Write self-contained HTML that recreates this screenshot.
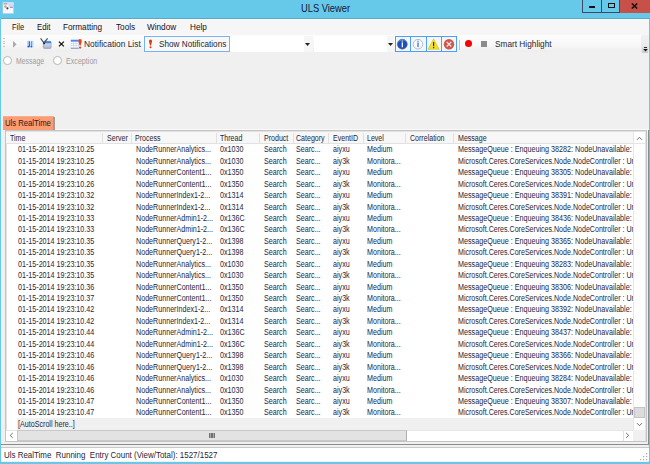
<!DOCTYPE html>
<html><head><meta charset="utf-8">
<style>
*{margin:0;padding:0;box-sizing:border-box}
html,body{width:650px;height:464px;overflow:hidden;background:#67c9e9;font-family:"Liberation Sans",sans-serif;color:#262636;position:relative}
.a{position:absolute}
.t{position:absolute;white-space:nowrap;font-size:8.5px;line-height:11px;transform-origin:0 0;transform:scaleX(0.84)}
.row{position:absolute;left:0;width:627px;height:11.44px}
.hdr{position:absolute;white-space:nowrap;font-size:8.5px;line-height:11px;transform-origin:0 0;transform:scaleX(0.83)}
.sep{position:absolute;top:133px;width:1px;height:10px;background:#e0e0e0}
.mn{position:absolute;top:21px;font-size:9px;color:#121226;line-height:12px;white-space:nowrap;transform-origin:0 0;transform:scaleX(0.91)}
.tb{position:absolute;font-size:9.3px;line-height:12px;white-space:nowrap;transform-origin:0 0}
</style></head><body>
<!-- title bar -->
<div class="a" style="left:300.5px;top:1.9px;font-size:10.6px;line-height:13px;white-space:nowrap;color:#14163a;transform-origin:0 0;transform:scaleX(0.88)">ULS Viewer</div>
<div class="a" style="left:582px;top:0;width:20px;height:13px;border-left:1px solid #3b4a66;border-bottom:1px solid #3b4a66;border-right:1px solid #3b4a66"></div>
<div class="a" style="left:601px;top:0;width:19px;height:13px;border-bottom:1px solid #3b4a66;border-right:1px solid #3b4a66"></div>
<div class="a" style="left:620px;top:0;width:30px;height:13px;background:#c75049"></div>
<div class="a" style="left:588.6px;top:6px;width:6.6px;height:2px;background:#111"></div>
<div class="a" style="left:607.5px;top:3px;width:7px;height:5px;border:1.5px solid #111"></div>
<svg class="a" style="left:631px;top:2.5px" width="7" height="6" viewBox="0 0 7 6"><path d="M0.8 0.5 L6.2 5.5 M6.2 0.5 L0.8 5.5" stroke="#111" stroke-width="1.5"/></svg>
<!-- client -->
<div class="a" style="left:1px;top:18px;width:648px;height:444px;background:#f0f0f0"></div>
<div class="a" style="left:1px;top:18px;width:648px;height:1px;background:#5aa9c8"></div>
<div class="a" style="left:1px;top:19px;width:648px;height:16px;background:#f6f6f6;border-top:1px solid #fdfdfd"></div>
<!-- menu -->
<div class="mn" style="left:11.5px;transform:scaleX(0.83)">File</div>
<div class="mn" style="left:36.5px;transform:scaleX(0.87)">Edit</div>
<div class="mn" style="left:62.9px">Formatting</div>
<div class="mn" style="left:115.5px">Tools</div>
<div class="mn" style="left:147.3px">Window</div>
<div class="mn" style="left:189.6px">Help</div>
<!-- toolbar -->
<div class="a" style="left:1px;top:35px;width:641px;height:17px;background:linear-gradient(#fdfdfd,#f8f8f8 55%,#ededed)"></div>
<div class="a" style="left:641px;top:35px;width:8px;height:17px;background:linear-gradient(#f2f2f2,#e6e6e6)"></div>
<div class="tb" style="left:83.5px;top:37.6px;transform:scaleX(0.90)">Notification List</div>
<div class="a" style="left:144px;top:36px;width:86px;height:15.5px;border:1px solid #78b0f0;background:#f8f8f8"></div>
<div class="tb" style="left:158.5px;top:37.6px;transform:scaleX(0.88)">Show Notifications</div>
<div class="a" style="left:230px;top:36px;width:82.5px;height:15.5px;background:#fff"></div>
<div class="a" style="left:303.5px;top:36px;width:9px;height:15.5px;background:#f6f6f6"></div>
<div class="a" style="left:314px;top:36px;width:79px;height:15.5px;background:#fff"></div>
<div class="a" style="left:386.5px;top:36px;width:7px;height:15.5px;background:#f6f6f6"></div>
<div class="tb" style="left:495.4px;top:37.6px;transform:scaleX(0.89)">Smart Highlight</div>

<!-- app icon -->
<svg class="a" style="left:2px;top:2px" width="13" height="13" viewBox="0 0 13 13">
<rect x="0.9" y="0.5" width="10.6" height="11" fill="#f6f8fd" stroke="#c0cce4" stroke-width="0.5"/>
<rect x="0.9" y="0.5" width="10.6" height="2.4" fill="#dfe6f4"/>
<rect x="1.6" y="1" width="3.6" height="1.4" fill="#9ab0dc"/>
<rect x="6.4" y="1.6" width="4.8" height="3.2" fill="#d2dbee"/>
<circle cx="3.4" cy="4.6" r="1.3" fill="#f2a446"/>
<circle cx="5.4" cy="6.3" r="1.1" fill="#36466a"/>
<rect x="7.8" y="4.8" width="3" height="1.1" fill="#a088d0"/>
</svg>
<!-- grip -->
<div class="a" style="left:3px;top:37.8px;width:2px;height:1px;background:#c4c4c4"></div>
<div class="a" style="left:3px;top:40.5px;width:2px;height:1px;background:#c4c4c4"></div>
<div class="a" style="left:3px;top:43.3px;width:2px;height:1px;background:#c4c4c4"></div>
<div class="a" style="left:3px;top:46px;width:2px;height:1px;background:#c4c4c4"></div>
<!-- play -->
<svg class="a" style="left:12px;top:40px" width="6" height="9" viewBox="0 0 6 9"><path d="M1 1 L4.6 4.3 L1 7.8 Z" fill="#aaaaaa"/></svg>
<!-- pause -->
<svg class="a" style="left:22px;top:36px" width="16" height="16" viewBox="0 0 16 16">
<rect x="5.2" y="4.8" width="3.1" height="6.6" rx="0.6" fill="#a9d0f8"/>
<rect x="8.6" y="4.8" width="2.8" height="6.6" rx="0.6" fill="#b4d8fa"/>
<rect x="6.9" y="5.4" width="1" height="5.3" fill="#3c56a8"/>
<rect x="9.0" y="5.4" width="0.9" height="5.3" fill="#6a8ad8"/>
<circle cx="6.4" cy="10.6" r="0.9" fill="#2a5cc8"/>
<circle cx="9.3" cy="10.6" r="0.9" fill="#2a5cd8"/>
</svg>
<!-- filter -->
<svg class="a" style="left:38px;top:36px" width="16" height="16" viewBox="0 0 16 16">
<defs><linearGradient id="wg" x1="0" y1="0" x2="0" y2="1"><stop offset="0" stop-color="#e4e8ee"/><stop offset="1" stop-color="#aab6cc"/></linearGradient></defs>
<rect x="5.3" y="5.3" width="7.8" height="7.1" rx="1" fill="url(#wg)" stroke="#7c94bc" stroke-width="0.6"/>
<rect x="5.3" y="5.3" width="7.8" height="1.9" rx="0.8" fill="#3a84ec"/>
<path d="M2.6 2.4 L6 7 M9.6 2.4 L6.6 6.2" stroke="#505050" stroke-width="1.2" fill="none"/>
<circle cx="6.1" cy="7.4" r="0.9" fill="#1a1a1a"/>
</svg>
<!-- X -->
<svg class="a" style="left:58px;top:40.5px" width="7" height="6" viewBox="0 0 7 6"><path d="M0.9 0.6 L5.9 5.4 M5.9 0.6 L0.9 5.4" stroke="#111" stroke-width="1.25"/></svg>
<!-- calendar -->
<svg class="a" style="left:68px;top:36px" width="16" height="16" viewBox="0 0 16 16">
<rect x="2.8" y="3.8" width="7.9" height="8.8" fill="#c4d2ea"/>
<rect x="2.8" y="3.8" width="7.9" height="1.8" fill="#4a8ae4"/>
<rect x="3.3" y="5.9" width="1.9" height="1.3" fill="#fff"/><rect x="5.8" y="5.9" width="1.9" height="1.3" fill="#fff"/><rect x="8.3" y="5.9" width="1.9" height="1.3" fill="#fff"/><rect x="3.3" y="7.9" width="1.9" height="1.3" fill="#fff"/><rect x="5.8" y="7.9" width="1.9" height="1.3" fill="#fff"/><rect x="8.3" y="7.9" width="1.9" height="1.3" fill="#fff"/><rect x="3.3" y="9.9" width="1.9" height="1.3" fill="#fff"/><rect x="5.8" y="9.9" width="1.9" height="1.3" fill="#fff"/><rect x="8.3" y="9.9" width="1.9" height="1.3" fill="#fff"/>
<rect x="2.8" y="12" width="7.9" height="0.7" fill="#8092b8"/>
<path d="M11.9 3 Q14 3 13.7 5.2 L12.7 9.5 L11.6 9.5 L10.5 5.2 Q10 3 11.9 3 Z" fill="#e8401c"/>
<circle cx="12.1" cy="11.6" r="1.1" fill="#e8401c"/>
</svg>
<!-- show notif ! -->
<svg class="a" style="left:147.5px;top:38.5px" width="5" height="10" viewBox="0 0 5 10">
<path d="M2.5 0.4 Q4.4 0.4 4 2.5 L3 6.6 L2 6.6 L1 2.5 Q0.6 0.4 2.5 0.4 Z" fill="#e23a18"/>
<circle cx="2.5" cy="8.3" r="1" fill="#e23a18"/>
</svg>
<!-- combo arrows -->
<svg class="a" style="left:305px;top:42.5px" width="5" height="3" viewBox="0 0 5 3"><path d="M0 0 H5 L2.5 3 Z" fill="#222"/></svg>
<svg class="a" style="left:388px;top:42.5px" width="5" height="3" viewBox="0 0 5 3"><path d="M0 0 H5 L2.5 3 Z" fill="#222"/></svg>
<!-- level buttons -->
<div class="a" style="left:395px;top:36px;width:62px;height:15.5px;border:1px solid #4aa0f8;background:#f6f6f6"></div>
<div class="a" style="left:410px;top:36px;width:1.3px;height:15.5px;background:#4aa0f8"></div>
<div class="a" style="left:425.5px;top:36px;width:1.3px;height:15.5px;background:#4aa0f8"></div>
<div class="a" style="left:441px;top:36px;width:1.3px;height:15.5px;background:#4aa0f8"></div>
<svg class="a" style="left:396px;top:37.5px" width="14" height="13" viewBox="0 0 14 13">
<circle cx="6.3" cy="6.2" r="5" fill="#1f4fb8" stroke="#6a6a70" stroke-width="0.5"/>
<path d="M2 4 Q6 0 10 3" stroke="#5a8ae0" stroke-width="1" fill="none"/>
<rect x="5.7" y="2.6" width="1.2" height="1" fill="#fff"/>
<rect x="5.7" y="4.3" width="1.2" height="5" fill="#fff"/>
</svg>
<svg class="a" style="left:411px;top:37.5px" width="14" height="13" viewBox="0 0 14 13">
<circle cx="7" cy="6.2" r="4.8" fill="#f6f8fc" stroke="#a8b8cc" stroke-width="0.9"/>
<rect x="6.4" y="2.8" width="1.2" height="1" fill="#3068c8"/>
<rect x="6.4" y="4.5" width="1.2" height="4.6" fill="#3068c8"/>
</svg>
<svg class="a" style="left:427px;top:37.5px" width="14" height="13" viewBox="0 0 14 13">
<path d="M6.6 0.8 L12.2 11.3 L1 11.3 Z" fill="#f4e21a" stroke="#c8b030" stroke-width="0.5"/>
<rect x="6" y="4" width="1.2" height="4.2" fill="#2a2a40"/>
<rect x="6" y="9" width="1.2" height="1.2" fill="#2a2a40"/>
</svg>
<svg class="a" style="left:442px;top:37.5px" width="14" height="13" viewBox="0 0 14 13">
<circle cx="7" cy="6.2" r="5.2" fill="#cc5a4c"/>
<path d="M4.7 3.9 L9.3 8.5 M9.3 3.9 L4.7 8.5" stroke="#f4e4e0" stroke-width="1.3"/>
</svg>
<div class="a" style="left:459px;top:39.5px;width:1px;height:10.5px;background:#c4c4c4"></div>
<div class="a" style="left:464.8px;top:39.9px;width:7.2px;height:7.2px;border-radius:50%;background:#f40000"></div>
<div class="a" style="left:480.8px;top:40.8px;width:6.5px;height:6px;background:#8c8c8c"></div>
<!-- overflow -->
<div class="a" style="left:642px;top:45.5px;width:6px;height:7px;background:linear-gradient(#e8e8e8,#c8c8c8)"></div>
<div class="a" style="left:643.5px;top:47px;width:3px;height:0.8px;background:#333"></div>
<svg class="a" style="left:643px;top:48.5px" width="5" height="3" viewBox="0 0 5 3"><path d="M0.2 0 H4.8 L2.5 2.6 Z" fill="#111"/></svg>

<!-- radios -->
<div class="a" style="left:3.2px;top:56.2px;width:8.5px;height:8.5px;border-radius:50%;border:1px solid #b8b8b8;background:#fff"></div>
<div class="a" style="left:53px;top:56.2px;width:8.5px;height:8.5px;border-radius:50%;border:1px solid #b8b8b8;background:#fff"></div>
<div class="a" style="left:16.3px;top:56px;font-size:8.6px;line-height:11px;color:#9c9ca4;white-space:nowrap;transform-origin:0 0;transform:scaleX(0.805)">Message</div>
<div class="a" style="left:66px;top:56px;font-size:8.6px;line-height:11px;color:#9c9ca4;white-space:nowrap;transform-origin:0 0;transform:scaleX(0.83)">Exception</div>
<!-- tab -->
<div class="a" style="left:3px;top:116.3px;width:50.5px;height:14.2px;background:#fd9b72;border-top:1px solid #f9ae94"></div><div class="a" style="left:53px;top:116.5px;width:1.5px;height:14px;background:#a39b96"></div>
<div class="a" style="left:4.7px;top:117.3px;font-size:9.4px;line-height:12px;white-space:nowrap;color:#2a1a1a;transform-origin:0 0;transform:scaleX(0.82)">Uls RealTime</div>
<!-- listview -->
<div class="a" style="left:54.5px;top:129px;width:594px;height:1px;background:#fafafa"></div>
<div class="a" style="left:4.5px;top:129.8px;width:642px;height:312.5px;border:1px solid #c4c4c4;background:#fff"></div>
<div class="a" style="left:5.5px;top:130.8px;width:640px;height:310.5px;border:1px solid #e2e2e2"></div>
<div class="a" style="left:6px;top:132px;width:627px;height:11.5px;background:#f7f7f7;border-bottom:1px solid #e2e2e2"></div>
<div class="sep" style="left:102px"></div><div class="sep" style="left:131px"></div><div class="sep" style="left:216px"></div><div class="sep" style="left:259px"></div><div class="sep" style="left:293px"></div><div class="sep" style="left:328px"></div><div class="sep" style="left:363px"></div><div class="sep" style="left:405px"></div><div class="sep" style="left:453px"></div><div class="sep" style="left:633px"></div>
<div class="hdr" style="left:10px;top:133.3px">Time</div><div class="hdr" style="left:106.5px;top:133.3px">Server</div><div class="hdr" style="left:135.4px;top:133.3px">Process</div><div class="hdr" style="left:220.4px;top:133.3px">Thread</div><div class="hdr" style="left:263.6px;top:133.3px">Product</div><div class="hdr" style="left:296px;top:133.3px">Category</div><div class="hdr" style="left:332.7px;top:133.3px">EventID</div><div class="hdr" style="left:367.3px;top:133.3px">Level</div><div class="hdr" style="left:409.6px;top:133.3px">Correlation</div><div class="hdr" style="left:457.6px;top:133.3px">Message</div>
<div class="a" style="left:6px;top:132px;width:627px;height:298px;overflow:hidden">
<div class="row" style="top:12.30px"><div class="t" style="left:12.2px;top:0px">01-15-2014 19:23:10.25</div><div class="t" style="left:129.8px;top:0px">NodeRunnerAnalytics...</div><div class="t" style="left:214.4px;top:0px">0x1030</div><div class="t" style="left:257.6px;top:0px">Search</div><div class="t" style="left:290.0px;top:0px">Searc...</div><div class="t" style="left:326.7px;top:0px">aiyxu</div><div class="t" style="left:361.3px;top:0px">Medium</div><div class="t" style="left:452.0px;top:0;transform:scaleX(0.845)">MessageQueue : Enqueuing 38282: NodeUnavailable:</div></div><div class="row" style="top:23.74px"><div class="t" style="left:12.2px;top:0px">01-15-2014 19:23:10.25</div><div class="t" style="left:129.8px;top:0px">NodeRunnerAnalytics...</div><div class="t" style="left:214.4px;top:0px">0x1030</div><div class="t" style="left:257.6px;top:0px">Search</div><div class="t" style="left:290.0px;top:0px">Searc...</div><div class="t" style="left:326.7px;top:0px">aiy3k</div><div class="t" style="left:361.3px;top:0px">Monitora...</div><div class="t" style="left:452.0px;top:0;transform:scaleX(0.833)">Microsoft.Ceres.CoreServices.Node.NodeController : Un</div></div><div class="row" style="top:35.18px"><div class="t" style="left:12.2px;top:0px">01-15-2014 19:23:10.26</div><div class="t" style="left:129.8px;top:0px">NodeRunnerContent1...</div><div class="t" style="left:214.4px;top:0px">0x1350</div><div class="t" style="left:257.6px;top:0px">Search</div><div class="t" style="left:290.0px;top:0px">Searc...</div><div class="t" style="left:326.7px;top:0px">aiyxu</div><div class="t" style="left:361.3px;top:0px">Medium</div><div class="t" style="left:452.0px;top:0;transform:scaleX(0.845)">MessageQueue : Enqueuing 38305: NodeUnavailable:</div></div><div class="row" style="top:46.62px"><div class="t" style="left:12.2px;top:0px">01-15-2014 19:23:10.26</div><div class="t" style="left:129.8px;top:0px">NodeRunnerContent1...</div><div class="t" style="left:214.4px;top:0px">0x1350</div><div class="t" style="left:257.6px;top:0px">Search</div><div class="t" style="left:290.0px;top:0px">Searc...</div><div class="t" style="left:326.7px;top:0px">aiy3k</div><div class="t" style="left:361.3px;top:0px">Monitora...</div><div class="t" style="left:452.0px;top:0;transform:scaleX(0.833)">Microsoft.Ceres.CoreServices.Node.NodeController : Un</div></div><div class="row" style="top:58.06px"><div class="t" style="left:12.2px;top:0px">01-15-2014 19:23:10.32</div><div class="t" style="left:129.8px;top:0px">NodeRunnerIndex1-2...</div><div class="t" style="left:214.4px;top:0px">0x1314</div><div class="t" style="left:257.6px;top:0px">Search</div><div class="t" style="left:290.0px;top:0px">Searc...</div><div class="t" style="left:326.7px;top:0px">aiyxu</div><div class="t" style="left:361.3px;top:0px">Medium</div><div class="t" style="left:452.0px;top:0;transform:scaleX(0.845)">MessageQueue : Enqueuing 38391: NodeUnavailable:</div></div><div class="row" style="top:69.50px"><div class="t" style="left:12.2px;top:0px">01-15-2014 19:23:10.32</div><div class="t" style="left:129.8px;top:0px">NodeRunnerIndex1-2...</div><div class="t" style="left:214.4px;top:0px">0x1314</div><div class="t" style="left:257.6px;top:0px">Search</div><div class="t" style="left:290.0px;top:0px">Searc...</div><div class="t" style="left:326.7px;top:0px">aiy3k</div><div class="t" style="left:361.3px;top:0px">Monitora...</div><div class="t" style="left:452.0px;top:0;transform:scaleX(0.833)">Microsoft.Ceres.CoreServices.Node.NodeController : Un</div></div><div class="row" style="top:80.94px"><div class="t" style="left:12.2px;top:0px">01-15-2014 19:23:10.33</div><div class="t" style="left:129.8px;top:0px">NodeRunnerAdmin1-2...</div><div class="t" style="left:214.4px;top:0px">0x136C</div><div class="t" style="left:257.6px;top:0px">Search</div><div class="t" style="left:290.0px;top:0px">Searc...</div><div class="t" style="left:326.7px;top:0px">aiyxu</div><div class="t" style="left:361.3px;top:0px">Medium</div><div class="t" style="left:452.0px;top:0;transform:scaleX(0.845)">MessageQueue : Enqueuing 38436: NodeUnavailable:</div></div><div class="row" style="top:92.38px"><div class="t" style="left:12.2px;top:0px">01-15-2014 19:23:10.33</div><div class="t" style="left:129.8px;top:0px">NodeRunnerAdmin1-2...</div><div class="t" style="left:214.4px;top:0px">0x136C</div><div class="t" style="left:257.6px;top:0px">Search</div><div class="t" style="left:290.0px;top:0px">Searc...</div><div class="t" style="left:326.7px;top:0px">aiy3k</div><div class="t" style="left:361.3px;top:0px">Monitora...</div><div class="t" style="left:452.0px;top:0;transform:scaleX(0.833)">Microsoft.Ceres.CoreServices.Node.NodeController : Un</div></div><div class="row" style="top:103.82px"><div class="t" style="left:12.2px;top:0px">01-15-2014 19:23:10.35</div><div class="t" style="left:129.8px;top:0px">NodeRunnerQuery1-2...</div><div class="t" style="left:214.4px;top:0px">0x1398</div><div class="t" style="left:257.6px;top:0px">Search</div><div class="t" style="left:290.0px;top:0px">Searc...</div><div class="t" style="left:326.7px;top:0px">aiyxu</div><div class="t" style="left:361.3px;top:0px">Medium</div><div class="t" style="left:452.0px;top:0;transform:scaleX(0.845)">MessageQueue : Enqueuing 38365: NodeUnavailable:</div></div><div class="row" style="top:115.26px"><div class="t" style="left:12.2px;top:0px">01-15-2014 19:23:10.35</div><div class="t" style="left:129.8px;top:0px">NodeRunnerQuery1-2...</div><div class="t" style="left:214.4px;top:0px">0x1398</div><div class="t" style="left:257.6px;top:0px">Search</div><div class="t" style="left:290.0px;top:0px">Searc...</div><div class="t" style="left:326.7px;top:0px">aiy3k</div><div class="t" style="left:361.3px;top:0px">Monitora...</div><div class="t" style="left:452.0px;top:0;transform:scaleX(0.833)">Microsoft.Ceres.CoreServices.Node.NodeController : Un</div></div><div class="row" style="top:126.70px"><div class="t" style="left:12.2px;top:0px">01-15-2014 19:23:10.35</div><div class="t" style="left:129.8px;top:0px">NodeRunnerAnalytics...</div><div class="t" style="left:214.4px;top:0px">0x1030</div><div class="t" style="left:257.6px;top:0px">Search</div><div class="t" style="left:290.0px;top:0px">Searc...</div><div class="t" style="left:326.7px;top:0px">aiyxu</div><div class="t" style="left:361.3px;top:0px">Medium</div><div class="t" style="left:452.0px;top:0;transform:scaleX(0.845)">MessageQueue : Enqueuing 38283: NodeUnavailable:</div></div><div class="row" style="top:138.14px"><div class="t" style="left:12.2px;top:0px">01-15-2014 19:23:10.35</div><div class="t" style="left:129.8px;top:0px">NodeRunnerAnalytics...</div><div class="t" style="left:214.4px;top:0px">0x1030</div><div class="t" style="left:257.6px;top:0px">Search</div><div class="t" style="left:290.0px;top:0px">Searc...</div><div class="t" style="left:326.7px;top:0px">aiy3k</div><div class="t" style="left:361.3px;top:0px">Monitora...</div><div class="t" style="left:452.0px;top:0;transform:scaleX(0.833)">Microsoft.Ceres.CoreServices.Node.NodeController : Un</div></div><div class="row" style="top:149.58px"><div class="t" style="left:12.2px;top:0px">01-15-2014 19:23:10.36</div><div class="t" style="left:129.8px;top:0px">NodeRunnerContent1...</div><div class="t" style="left:214.4px;top:0px">0x1350</div><div class="t" style="left:257.6px;top:0px">Search</div><div class="t" style="left:290.0px;top:0px">Searc...</div><div class="t" style="left:326.7px;top:0px">aiyxu</div><div class="t" style="left:361.3px;top:0px">Medium</div><div class="t" style="left:452.0px;top:0;transform:scaleX(0.845)">MessageQueue : Enqueuing 38306: NodeUnavailable:</div></div><div class="row" style="top:161.02px"><div class="t" style="left:12.2px;top:0px">01-15-2014 19:23:10.37</div><div class="t" style="left:129.8px;top:0px">NodeRunnerContent1...</div><div class="t" style="left:214.4px;top:0px">0x1350</div><div class="t" style="left:257.6px;top:0px">Search</div><div class="t" style="left:290.0px;top:0px">Searc...</div><div class="t" style="left:326.7px;top:0px">aiy3k</div><div class="t" style="left:361.3px;top:0px">Monitora...</div><div class="t" style="left:452.0px;top:0;transform:scaleX(0.833)">Microsoft.Ceres.CoreServices.Node.NodeController : Un</div></div><div class="row" style="top:172.46px"><div class="t" style="left:12.2px;top:0px">01-15-2014 19:23:10.42</div><div class="t" style="left:129.8px;top:0px">NodeRunnerIndex1-2...</div><div class="t" style="left:214.4px;top:0px">0x1314</div><div class="t" style="left:257.6px;top:0px">Search</div><div class="t" style="left:290.0px;top:0px">Searc...</div><div class="t" style="left:326.7px;top:0px">aiyxu</div><div class="t" style="left:361.3px;top:0px">Medium</div><div class="t" style="left:452.0px;top:0;transform:scaleX(0.845)">MessageQueue : Enqueuing 38392: NodeUnavailable:</div></div><div class="row" style="top:183.90px"><div class="t" style="left:12.2px;top:0px">01-15-2014 19:23:10.42</div><div class="t" style="left:129.8px;top:0px">NodeRunnerIndex1-2...</div><div class="t" style="left:214.4px;top:0px">0x1314</div><div class="t" style="left:257.6px;top:0px">Search</div><div class="t" style="left:290.0px;top:0px">Searc...</div><div class="t" style="left:326.7px;top:0px">aiy3k</div><div class="t" style="left:361.3px;top:0px">Monitora...</div><div class="t" style="left:452.0px;top:0;transform:scaleX(0.833)">Microsoft.Ceres.CoreServices.Node.NodeController : Un</div></div><div class="row" style="top:195.34px"><div class="t" style="left:12.2px;top:0px">01-15-2014 19:23:10.44</div><div class="t" style="left:129.8px;top:0px">NodeRunnerAdmin1-2...</div><div class="t" style="left:214.4px;top:0px">0x136C</div><div class="t" style="left:257.6px;top:0px">Search</div><div class="t" style="left:290.0px;top:0px">Searc...</div><div class="t" style="left:326.7px;top:0px">aiyxu</div><div class="t" style="left:361.3px;top:0px">Medium</div><div class="t" style="left:452.0px;top:0;transform:scaleX(0.845)">MessageQueue : Enqueuing 38437: NodeUnavailable:</div></div><div class="row" style="top:206.78px"><div class="t" style="left:12.2px;top:0px">01-15-2014 19:23:10.44</div><div class="t" style="left:129.8px;top:0px">NodeRunnerAdmin1-2...</div><div class="t" style="left:214.4px;top:0px">0x136C</div><div class="t" style="left:257.6px;top:0px">Search</div><div class="t" style="left:290.0px;top:0px">Searc...</div><div class="t" style="left:326.7px;top:0px">aiy3k</div><div class="t" style="left:361.3px;top:0px">Monitora...</div><div class="t" style="left:452.0px;top:0;transform:scaleX(0.833)">Microsoft.Ceres.CoreServices.Node.NodeController : Un</div></div><div class="row" style="top:218.22px"><div class="t" style="left:12.2px;top:0px">01-15-2014 19:23:10.46</div><div class="t" style="left:129.8px;top:0px">NodeRunnerQuery1-2...</div><div class="t" style="left:214.4px;top:0px">0x1398</div><div class="t" style="left:257.6px;top:0px">Search</div><div class="t" style="left:290.0px;top:0px">Searc...</div><div class="t" style="left:326.7px;top:0px">aiyxu</div><div class="t" style="left:361.3px;top:0px">Medium</div><div class="t" style="left:452.0px;top:0;transform:scaleX(0.845)">MessageQueue : Enqueuing 38366: NodeUnavailable:</div></div><div class="row" style="top:229.66px"><div class="t" style="left:12.2px;top:0px">01-15-2014 19:23:10.46</div><div class="t" style="left:129.8px;top:0px">NodeRunnerQuery1-2...</div><div class="t" style="left:214.4px;top:0px">0x1398</div><div class="t" style="left:257.6px;top:0px">Search</div><div class="t" style="left:290.0px;top:0px">Searc...</div><div class="t" style="left:326.7px;top:0px">aiy3k</div><div class="t" style="left:361.3px;top:0px">Monitora...</div><div class="t" style="left:452.0px;top:0;transform:scaleX(0.833)">Microsoft.Ceres.CoreServices.Node.NodeController : Un</div></div><div class="row" style="top:241.10px"><div class="t" style="left:12.2px;top:0px">01-15-2014 19:23:10.46</div><div class="t" style="left:129.8px;top:0px">NodeRunnerAnalytics...</div><div class="t" style="left:214.4px;top:0px">0x1030</div><div class="t" style="left:257.6px;top:0px">Search</div><div class="t" style="left:290.0px;top:0px">Searc...</div><div class="t" style="left:326.7px;top:0px">aiyxu</div><div class="t" style="left:361.3px;top:0px">Medium</div><div class="t" style="left:452.0px;top:0;transform:scaleX(0.845)">MessageQueue : Enqueuing 38284: NodeUnavailable:</div></div><div class="row" style="top:252.54px"><div class="t" style="left:12.2px;top:0px">01-15-2014 19:23:10.46</div><div class="t" style="left:129.8px;top:0px">NodeRunnerAnalytics...</div><div class="t" style="left:214.4px;top:0px">0x1030</div><div class="t" style="left:257.6px;top:0px">Search</div><div class="t" style="left:290.0px;top:0px">Searc...</div><div class="t" style="left:326.7px;top:0px">aiy3k</div><div class="t" style="left:361.3px;top:0px">Monitora...</div><div class="t" style="left:452.0px;top:0;transform:scaleX(0.833)">Microsoft.Ceres.CoreServices.Node.NodeController : Un</div></div><div class="row" style="top:263.98px"><div class="t" style="left:12.2px;top:0px">01-15-2014 19:23:10.47</div><div class="t" style="left:129.8px;top:0px">NodeRunnerContent1...</div><div class="t" style="left:214.4px;top:0px">0x1350</div><div class="t" style="left:257.6px;top:0px">Search</div><div class="t" style="left:290.0px;top:0px">Searc...</div><div class="t" style="left:326.7px;top:0px">aiyxu</div><div class="t" style="left:361.3px;top:0px">Medium</div><div class="t" style="left:452.0px;top:0;transform:scaleX(0.845)">MessageQueue : Enqueuing 38307: NodeUnavailable:</div></div><div class="row" style="top:275.42px"><div class="t" style="left:12.2px;top:0px">01-15-2014 19:23:10.47</div><div class="t" style="left:129.8px;top:0px">NodeRunnerContent1...</div><div class="t" style="left:214.4px;top:0px">0x1350</div><div class="t" style="left:257.6px;top:0px">Search</div><div class="t" style="left:290.0px;top:0px">Searc...</div><div class="t" style="left:326.7px;top:0px">aiy3k</div><div class="t" style="left:361.3px;top:0px">Monitora...</div><div class="t" style="left:452.0px;top:0;transform:scaleX(0.833)">Microsoft.Ceres.CoreServices.Node.NodeController : Un</div></div>
</div>
<div class="a" style="left:17px;top:418px;width:616px;height:11.7px;background:#f0f0f0"></div>
<div class="t" style="left:18px;top:418.8px">[AutoScroll here..]</div>
<!-- vscroll -->
<div class="a" style="left:633px;top:132px;width:12px;height:298px;background:#fff;border-left:1px solid #e6e6e6"></div>
<div class="a" style="left:633px;top:143px;width:12px;height:1px;background:#e6e6e6"></div>
<svg class="a" style="left:636px;top:136px" width="7" height="5" viewBox="0 0 7 5"><path d="M1 3.8 L3.5 1.3 L6 3.8" fill="none" stroke="#6a6a6a" stroke-width="1"/></svg>
<div class="a" style="left:633.5px;top:406.7px;width:11px;height:11.2px;background:#dcdcdc;border:1px solid #c4c4c4"></div>
<svg class="a" style="left:636px;top:421.5px" width="7" height="5" viewBox="0 0 7 5"><path d="M1 1.2 L3.5 3.7 L6 1.2" fill="none" stroke="#6a6a6a" stroke-width="1"/></svg>
<!-- hscroll -->
<div class="a" style="left:6px;top:430px;width:639px;height:11px;background:#fff;border-top:1px solid #e6e6e6"></div>
<svg class="a" style="left:8.9px;top:432px" width="5" height="7" viewBox="0 0 5 7"><path d="M3.7 1 L1.2 3.4 L3.7 5.8" fill="none" stroke="#6a6a6a" stroke-width="1"/></svg>
<div class="a" style="left:17px;top:430.3px;width:390px;height:10.4px;background:#e3e3e3;border:1px solid #c8c8c8;border-right-color:#b0b0b0"></div>
<div class="a" style="left:209px;top:432.8px;width:6px;height:5px;background:#a8a8a8"></div>
<div class="a" style="left:209px;top:432.8px;width:1px;height:5px;background:#707070"></div>
<div class="a" style="left:210.7px;top:432.8px;width:1px;height:5px;background:#707070"></div>
<div class="a" style="left:212.4px;top:432.8px;width:1px;height:5px;background:#707070"></div>
<div class="a" style="left:214px;top:432.8px;width:1px;height:5px;background:#707070"></div>
<div class="a" style="left:622.5px;top:430.5px;width:1px;height:10.5px;background:#e0e0e0"></div><div class="a" style="left:633px;top:430.5px;width:1px;height:10.5px;background:#e0e0e0"></div>
<svg class="a" style="left:625px;top:431.8px" width="5" height="7" viewBox="0 0 5 7"><path d="M1.2 1 L3.7 3.4 L1.2 5.8" fill="none" stroke="#6a6a6a" stroke-width="1"/></svg>
<div class="a" style="left:633px;top:430px;width:12px;height:11px;background:#f0f0f0"></div>
<div class="a" style="left:648px;top:129.6px;width:1px;height:315px;background:#8a8a8a"></div><div class="a" style="left:648px;top:444.6px;width:1px;height:17px;background:#e8dcdc"></div>
<!-- status bar -->
<div class="a" style="left:1px;top:443.6px;width:648px;height:1.2px;background:#8c8c8c"></div>
<div class="a" style="left:1px;top:446.6px;width:648px;height:14.5px;background:#fff;border-top:1px solid #c8c8c8"></div>
<div class="a" style="left:4.3px;top:450.2px;font-size:8.6px;line-height:11px;white-space:nowrap;color:#262636;transform-origin:0 0;transform:scaleX(0.925)">Uls RealTime&nbsp; Running&nbsp; Entry Count (View/Total): 1527/1527</div>
<svg class="a" style="left:639.6px;top:451.6px" width="9" height="9" viewBox="0 0 9 9">
<rect x="6" y="1" width="1.2" height="1.2" fill="#aaa"/><rect x="3" y="4" width="1.2" height="1.2" fill="#aaa"/><rect x="6" y="4" width="1.2" height="1.2" fill="#aaa"/>
<rect x="0" y="7" width="1.2" height="1.2" fill="#aaa"/><rect x="3" y="7" width="1.2" height="1.2" fill="#aaa"/><rect x="6" y="7" width="1.2" height="1.2" fill="#aaa"/>
</svg>
</body></html>
